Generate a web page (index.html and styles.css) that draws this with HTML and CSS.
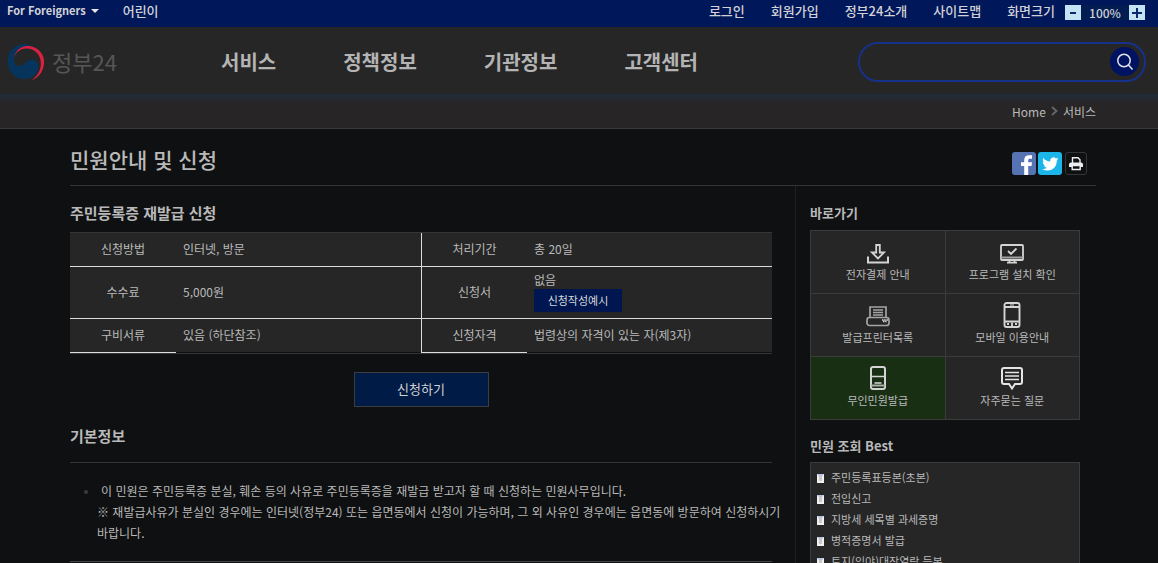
FILE: index.html
```html
<!DOCTYPE html>
<html lang="ko">
<head>
<meta charset="utf-8">
<title>정부24</title>
<link rel="stylesheet" href="styles.css">
</head>
<body>
<div class="topbar">
  <div class="topbar-left">
    <button class="lang" type="button">For Foreigners <span class="caret"></span></button>
    <a href="#">어린이</a>
  </div>
  <div class="topbar-right">
    <a href="#">로그인</a>
    <a href="#">회원가입</a>
    <a href="#">정부24소개</a>
    <a href="#">사이트맵</a>
    <div class="zoom">
      <span>화면크기</span>
      <div class="zoom-box">
        <button type="button" aria-label="축소"><svg width="6" height="8" viewBox="0 0 6 8"><path d="M0 4h6" stroke="#0b2a6b" stroke-width="2"/></svg></button>
        <span class="zoom-value">100%</span>
        <button type="button" aria-label="확대"><svg width="10" height="10" viewBox="0 0 10 10"><path d="M0 5h10M5 0v10" stroke="#0b2a6b" stroke-width="2"/></svg></button>
      </div>
    </div>
  </div>
</div>

<header class="header">
  <a class="logo" href="#">
    <svg width="38" height="38" viewBox="0 0 38 38" aria-hidden="true">
      <path d="M27 4.500C22 .3 14.500-.2 9 3.200C-1 9.500-1.500 23 5 30.500C11 37 21 38 27.500 32.500C32 28.500 33 21 28.500 17.800C24.500 15 20.500 17 18.500 19.500C16 22.800 11 24.500 8.500 21.500C5.500 17 7 10 12.500 6C17 3 22.500 3 27 4.500Z" fill="#06345c"/>
      <path d="M7.300 14.500C8.500 6 16.500 1.500 24 3.300C32 5.200 38 12 37 20.500C36.300 28.500 32 34.500 25 37.200C31 32.500 34.500 26 33.800 18.500C33 10.500 26.500 5 19 5.500C13 6 9 9 7.300 14.500Z" fill="#dc2140"/>
    </svg>
    <span>정부24</span>
  </a>
  <nav class="nav">
    <a href="#">서비스</a>
    <a href="#">정책정보</a>
    <a href="#">기관정보</a>
    <a href="#">고객센터</a>
  </nav>
  <form class="search">
    <input type="search" aria-label="검색어">
    <button type="button" aria-label="검색"><svg width="18" height="18" viewBox="0 0 18 18" fill="none" stroke="#e4e4ea" stroke-width="1.500"><circle cx="8" cy="7.500" r="6.200"/><path d="M12.500 12l4 4.500"/></svg></button>
  </form>
</header>

<div class="crumbs">
  <a href="#">Home</a>
  <svg width="7" height="10" viewBox="0 0 7 10" fill="none" stroke="#6a6669" stroke-width="1.800"><path d="M1 1l4.500 4L1 9"/></svg>
  <span>서비스</span>
</div>

<div class="page">
  <div class="page-head">
    <h1>민원안내 및 신청</h1>
    <div class="share">
      <button type="button" class="fb" aria-label="페이스북"><svg width="24" height="23" viewBox="0 0 24 23"><path d="M12.200 23v-9H9v-3.700h3.200V8.200C12.200 5 14 3.200 17 3.200h3v3.600h-2c-1.400 0-1.800.6-1.800 1.800v1.700H20l-.5 3.700h-3.300v9z" fill="#fff"/></svg></button>
      <button type="button" class="tw" aria-label="트위터"><svg width="24" height="23" viewBox="0 0 24 23"><path d="M20.500 6.800c-.6.300-1.200.5-1.900.6.700-.4 1.200-1 1.400-1.800-.6.400-1.300.6-2.100.8a3.400 3.400 0 0 0-5.700 3.100C9.500 9.300 7 8 5.200 5.900c-.9 1.600-.4 3.500 1 4.500-.5 0-1-.2-1.500-.4 0 1.600 1.100 3 2.700 3.300-.5.100-1 .1-1.500 0 .4 1.400 1.700 2.300 3.100 2.400A6.800 6.800 0 0 1 4 17.100c5.500 3.400 14.800 1.200 14.800-8.500.7-.5 1.200-1.100 1.700-1.800z" fill="#fff"/></svg></button>
      <button type="button" class="pr" aria-label="인쇄"><svg width="16" height="15" viewBox="0 0 16 15"><path d="M4.500 7V1.700H10L12 3.700V7" fill="none" stroke="#eee" stroke-width="1.400"/><path d="M1 8.500Q1 6.500 3 6.500h10q2 0 2 2V11H1z" fill="#eee"/><path d="M4.200 9.500h8v4h-8z" fill="#0f1011" stroke="#eee" stroke-width="1.400"/></svg></button>
    </div>
  </div>

  <div class="columns">
    <main class="main">
      <h2>주민등록증 재발급 신청</h2>
      <table class="info">
        <tr><th scope="row">신청방법</th><td>인터넷, 방문</td><th scope="row">처리기간</th><td>총 20일</td></tr>
        <tr class="tall"><th scope="row">수수료</th><td>5,000원</td><th scope="row">신청서</th><td>없음<a class="example" href="#">신청작성예시</a></td></tr>
        <tr><th scope="row">구비서류</th><td>있음 (하단참조)</td><th scope="row">신청자격</th><td>법령상의 자격이 있는 자(제3자)</td></tr>
      </table>
      <button type="button" class="apply">신청하기</button>
      <h2 class="basic">기본정보</h2>
      <ul class="desc">
        <li><p class="first">이 민원은 주민등록증 분실, 훼손 등의 사유로 주민등록증을 재발급 받고자 할 때 신청하는 민원사무입니다.</p>
        <p>※ 재발급사유가 분실인 경우에는 인터넷(정부24) 또는 읍면동에서 신청이 가능하며, 그 외 사유인 경우에는 읍면동에 방문하여 신청하시기 바랍니다.</p></li>
      </ul>
    </main>

    <aside class="side">
      <h3>바로가기</h3>
      <div class="quick">
        <a href="#"><svg width="24" height="26" viewBox="0 0 24 26" fill="none" stroke="#d4d4d4" stroke-width="2"><path d="M2 17.500v6h20v-6"/><path d="M10.200 6h3.600v7.500h4.200l-6 6-6-6h4.200z" stroke-width="1.800"/></svg><span>전자결제 안내</span></a>
        <a href="#"><svg width="24" height="26" viewBox="0 0 24 26" fill="none" stroke="#d4d4d4" stroke-width="1.800"><rect x="1" y="6" width="22" height="15" rx="1"/><path d="M1 18.500h22" stroke="#a4a4a4" stroke-width="2"/><path d="M8 12l3 3 5.500-5.500M9.500 21v2.500M14.500 21v2.500M7 23.700h10"/></svg><span>프로그램 설치 확인</span></a>
        <a href="#"><svg width="24" height="26" viewBox="0 0 24 26" fill="none" stroke="#a4a4a4" stroke-width="1.700"><path d="M4 15V5h16v10"/><path d="M7 8h10M7 10.500h10M7 13h10"/><rect x="1" y="15.500" width="22" height="8" rx="2.500"/><path d="M16 18h6M17 19.500h3.500" stroke="#ddd" stroke-dasharray="1.500 .7"/></svg><span>발급프린터목록</span></a>
        <a href="#"><svg width="24" height="26" viewBox="0 0 24 26" fill="none" stroke="#d4d4d4" stroke-width="1.900"><rect x="4.500" y="1" width="15" height="24" rx="2"/><path d="M4.500 5h15M4.500 19.500h15"/><path d="M10 3h4" stroke-width="1"/><path d="M12 20.500v3.500M7 22h2M15 22h2"/></svg><span>모바일 이용안내</span></a>
        <a class="green" href="#"><svg width="24" height="26" viewBox="0 0 24 26" fill="none" stroke="#d4d4d4" stroke-width="2"><rect x="5" y="2" width="14" height="22" rx="2"/><path d="M5 11.500h14" stroke-width="1.500"/><path d="M5 20.500h14M8.500 18h7" stroke="#a8b0a6"/></svg><span>무인민원발급</span></a>
        <a href="#"><svg width="24" height="26" viewBox="0 0 24 26" fill="none" stroke="#e4e4e4" stroke-width="2"><path d="M4 3h16q2 0 2 2v12q0 2-2 2h-5l-3 4.500L9 19H4q-2 0-2-2V5q0-2 2-2z"/><path d="M5 7.500h14M5 11h14M5 14.500h14" stroke-width="1.600"/></svg><span>자주묻는 질문</span></a>
      </div>
      <h3 class="best-title">민원 조회 Best</h3>
      <ul class="best">
        <li><a href="#">주민등록표등본(초본)</a></li>
        <li><a href="#">전입신고</a></li>
        <li><a href="#">지방세 세목별 과세증명</a></li>
        <li><a href="#">병적증명서 발급</a></li>
        <li><a href="#">토지(임야)대장열람 등본</a></li>
      </ul>
    </aside>
  </div>
</div>
</body>
</html>
```
FILE: styles.css
```css
*, *::before { box-sizing: border-box; }
body {
  margin: 0;
  height: 100vh;
  overflow: hidden;
  display: flex;
  flex-direction: column;
  background: #0f1011;
  color: #b9b9b9;
  font: 12px/21px "Noto Sans CJK KR", sans-serif;
}
a { color: inherit; text-decoration: none; }
button { font: inherit; color: inherit; border: 0; padding: 0; cursor: pointer; }
h1, h2, h3, p, ul { margin: 0; padding: 0; }
ul { list-style: none; }
svg { display: block; }

.topbar {
  flex: none;
  display: flex;
  justify-content: space-between;
  height: 27px;
  padding: 0 13px 6px 7px;
  background: #00175a;
  color: #d2d2d6;
  font-size: 13px;
  font-weight: 500;
}
.topbar-left, .topbar-right, .zoom, .zoom-box { display: flex; align-items: center; }
.topbar-left { gap: 24px; }
.topbar-right { gap: 26px; }
.lang { display: flex; align-items: center; gap: 5px; background: none; font-size: 11px; font-weight: 700; }
.caret { border: 4px solid transparent; border-top-color: #e6e6e6; border-bottom: 0; }
.zoom { gap: 10px; }
.zoom-box { height: 15px; margin-top: 4px; background: #021d52; font-size: 12px; }
.zoom-box button { display: grid; place-items: center; width: 16px; height: 15px; background: #c4e3f5; }
.zoom-value { width: 48px; text-align: center; }

.header {
  flex: none;
  display: flex;
  align-items: center;
  height: 67px;
  padding: 2px 12px 0 7px;
  background: #262626;
}
.logo { display: flex; align-items: center; gap: 7px; width: 214px; font-size: 22px; color: #565656; }
.nav { flex: 1; display: flex; gap: 67px; font-size: 20px; font-weight: 700; color: #b4b4b4; }
.search {
  display: flex;
  align-items: center;
  width: 288px;
  height: 40px;
  padding: 0 5px 0 16px;
  border: 2px solid #15318a;
  border-radius: 20px;
}
.search input { flex: 1; min-width: 0; border: 0; outline: 0; background: none; color: #ddd; font: inherit; }
.search button { display: grid; place-items: center; width: 29px; height: 29px; border-radius: 50%; background: #001262; }

.crumbs {
  flex: none;
  display: flex;
  align-items: center;
  justify-content: flex-end;
  gap: 5px;
  height: 35px;
  padding: 0 62px 0 70px;
  background: linear-gradient(#222c3b, #282526 10px);
  border-bottom: 1px solid #3d3a3b;
}

.page { padding: 0 62px 0 70px; }
.page-head {
  display: flex;
  align-items: center;
  justify-content: space-between;
  height: 56px;
  padding: 0 9px 0 0;
}
.page-head h1 { padding-top: 4px; font-size: 21px; line-height: 30px; font-weight: 500; }
.share { display: flex; gap: 2px; padding-top: 13px; }
.share button { display: grid; place-items: center; width: 24px; height: 23px; border-radius: 3px; overflow: hidden; }
.fb { background: #5673b4; }
.tw { background: #1bb5ea; }
.share .pr { width: 22px; margin-left: 1px; background: none; border: 1px solid #343536; }

.columns { display: flex; border-top: 1px solid #333435; }
.main { flex: 1; padding-right: 23px; border-right: 1px solid #1f2021; }
.main h2 { margin-top: 16px; font-size: 15px; line-height: 22px; font-weight: 700; }
.info {
  width: 100%;
  margin-top: 8px;
  table-layout: fixed;
  border-collapse: separate;
  border-spacing: 0;
  border-top: 1px solid #363636;
  border-bottom: 1px solid #363636;
}
.info th, .info td { height: 34px; padding: 0 0 2px; background: #262626; border-bottom: 1px solid #dcdcdc; font-weight: 400; }
.info th { width: 106px; }
.info td { padding-left: 7px; text-align: left; }
.info th:nth-child(3) { border-left: 1px solid #dcdcdc; }
.info tr:last-child td { border-bottom-color: #0f1011; }
.info .tall th, .info .tall td { height: 52px; }
.info td:last-child { line-height: 18px; }
.example {
  display: block;
  width: 88px;
  background: #001650;
  color: #d8d8d8;
  font-size: 11px;
  line-height: 23px;
  text-align: center;
}
.apply {
  display: block;
  width: 135px;
  height: 35px;
  margin: 18px auto 0;
  padding-bottom: 3px;
  background: #001b45;
  border: 1px solid #3c3d3f;
  color: #d0d0d0;
  font-size: 13px;
}
.main .basic { margin-top: 18px; }
.desc { margin-top: 15px; padding: 17px 0 18px 27px; border-top: 1px solid #333435; border-bottom: 1px solid #444; }
.desc li::before { content: ""; float: left; width: 4px; height: 4px; margin: 10px 0 0 -13px; border-radius: 50%; background: #3a3b3c; }
.desc p { margin-right: -14px; }
.desc .first { padding-left: 4px; }

.side { width: 300px; padding: 16px 16px 0 14px; }
.side h3 { font-size: 13px; line-height: 22px; font-weight: 700; }
.quick {
  display: grid;
  grid-template-columns: 1fr 1fr;
  gap: 1px;
  margin-top: 6px;
  border: 1px solid #3b3b3b;
  background: #3b3b3b;
}
.quick a {
  display: flex;
  flex-direction: column;
  align-items: center;
  padding: 8px 0 10px;
  background: #262626;
  font-size: 11px;
  line-height: 18px;
}
.quick a svg { height: 26px; }
.quick .green { background: #182f14; }
.side .best-title { margin-top: 15px; }
.best { margin-top: 5px; padding: 4px 9px 12px 6px; border: 1px solid #3b3b3b; background: #262626; font-size: 11px; }
.best li { display: flex; align-items: center; gap: 7px; }
.best li::before { content: ""; width: 7px; height: 9px; margin-top: 2px; background: #c8c8c8; border: 2px solid #f0f0f0; border-top-color: #b4c4e0; }
```
